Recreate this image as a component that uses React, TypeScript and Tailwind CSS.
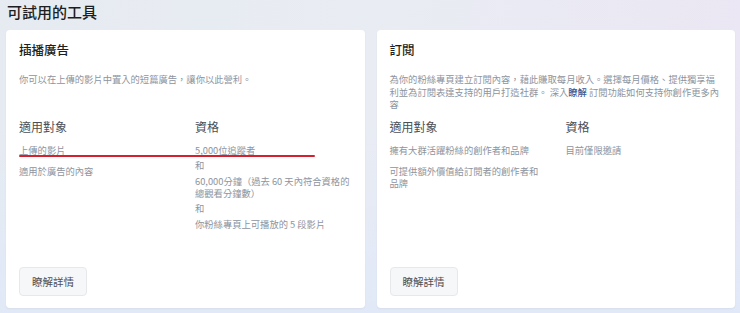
import React from 'react';

const font = "font-['Noto_Sans_CJK_TC','Noto_Sans',sans-serif]";

type Tool = {
  title: string;
  desc: React.ReactNode;
  audience: string[];
  eligibility: string[];
  underline?: boolean;
};

const tools: Tool[] = [
  {
    title: '插播廣告',
    desc: '你可以在上傳的影片中置入的短篇廣告，讓你以此營利。',
    audience: ['上傳的影片', '適用於廣告的內容'],
    eligibility: ['5,000位追蹤者', '和', '60,000分鐘（過去 60 天內符合資格的總觀看分鐘數）', '和', '你粉絲專頁上可播放的 5 段影片'],
    underline: true,
  },
  {
    title: '訂閱',
    desc: (
      <>
        為你的粉絲專頁建立訂閱內容，藉此賺取每月收入。選擇每月價格、提供獨享福利並為訂閱表達支持的用戶打造社群。 深入<span className="text-[#385898] font-medium">瞭解</span> 訂閱功能如何支持你創作更多內容
      </>
    ),
    audience: ['擁有大群活躍粉絲的創作者和品牌', '可提供額外價值給訂閱者的創作者和品牌'],
    eligibility: ['目前僅限邀請'],
  },
];

const ToolCard: React.FC<{ tool: Tool }> = ({ tool }) => (
  <div className="relative flex flex-col bg-white rounded-[4px] shadow-[0_1px_2px_rgba(0,0,0,0.05)] px-[13px] pt-[12px] pb-[12px] h-[278px]">
    <h3 className="text-[12.5px] leading-[16px] font-medium text-[#1c1e21]">{tool.title}</h3>
    <p className="mt-[15px] h-[46px] pr-[2px] text-[9.3px] leading-[12.5px] text-[#8d949e]">{tool.desc}</p>
    <div className="grid grid-cols-[176px_1fr]">
      <div>
        <div className="text-[12px] leading-[16px] text-[#4b4f56]">適用對象</div>
        <div className="mt-[8.5px] flex flex-col gap-[9.5px] pr-[22px]">
          {tool.audience.map((a) => (
            <div key={a} className="text-[9.3px] leading-[12px] text-[#8d949e]">{a}</div>
          ))}
        </div>
      </div>
      <div>
        <div className="text-[12px] leading-[16px] text-[#4b4f56]">資格</div>
        <div className="mt-[8.5px] flex flex-col gap-[3.5px]">
          {tool.eligibility.map((e, i) => (
            <div key={i} className="text-[9.3px] leading-[12px] text-[#8d949e]">{e}</div>
          ))}
        </div>
      </div>
    </div>
    {tool.underline && (
      <div className="absolute left-[13px] top-[125px] w-[296px] h-[2px] bg-[#d6202e] rounded-full" />
    )}
    <div className="mt-auto">
      <button className="h-[29px] w-[68px] rounded-[4px] border border-[#e6e8eb] bg-[#f6f7f9] text-[10.5px] text-[#4b4f56]">
        瞭解詳情
      </button>
    </div>
  </div>
);

export default function App() {
  return (
    <div className={`${font} w-[740px] h-[313px] overflow-hidden bg-[linear-gradient(100deg,#e6ebf1_0%,#e9ecf3_50%,#ebe6f4_100%)]`}>
      <div className="bg-[linear-gradient(180deg,rgba(255,255,255,0)_40%,#e1e9f8_100%)] h-full pl-[6px] pr-[5px] pt-[2px]">
        <h2 className="text-[15px] leading-[20px] font-medium text-[#1c1e21] pl-[1px]">可試用的工具</h2>
        <div className="grid grid-cols-2 gap-[12px] mt-[8px]">
          {tools.map((t) => (
            <ToolCard key={t.title} tool={t} />
          ))}
        </div>
      </div>
    </div>
  );
}
